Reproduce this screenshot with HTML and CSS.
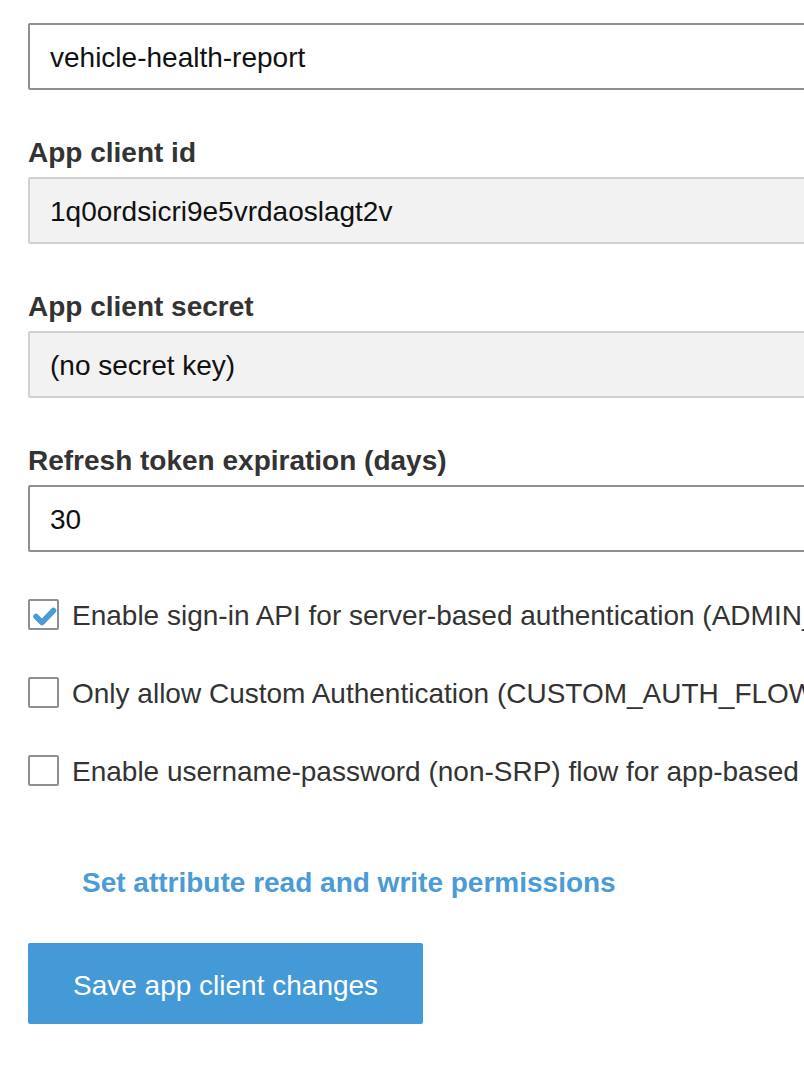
FILE: index.html
```html
<!DOCTYPE html>
<html>
<head>
<meta charset="utf-8">
<link rel="stylesheet" href="styles.css">
</head>
<body>
<main class="form">
  <input class="field" type="text" value="vehicle-health-report">

  <label class="label">App client id</label>
  <input class="field field-readonly" type="text" value="1q0ordsicri9e5vrdaoslagt2v" readonly>

  <label class="label">App client secret</label>
  <input class="field field-readonly" type="text" value="(no secret key)" readonly>

  <label class="label">Refresh token expiration (days)</label>
  <input class="field" type="text" value="30">

  <div class="checks">
    <div class="check-row">
      <span class="box">
        <svg viewBox="0 0 27 27" width="27" height="27"><path d="M6 15.5 L12 21.5 L23.5 9.5" fill="none" stroke="#4a9bd6" stroke-width="5.5" stroke-linecap="round" stroke-linejoin="round"/></svg>
      </span>
      <span class="check-text">Enable sign-in API for server-based authentication (ADMIN_NO_SRP_AUTH)</span>
    </div>
    <div class="check-row">
      <span class="box"></span>
      <span class="check-text">Only allow Custom Authentication (CUSTOM_AUTH_FLOW_ONLY)</span>
    </div>
    <div class="check-row">
      <span class="box"></span>
      <span class="check-text">Enable username-password (non-SRP) flow for app-based authentication (USER_PASSWORD_AUTH)</span>
    </div>
  </div>

  <a class="link" href="#">Set attribute read and write permissions</a>

  <button class="btn" type="button">Save app client changes</button>
</main>
</body>
</html>
```

FILE: styles.css
```css
html, body {
  margin: 0;
  padding: 0;
  overflow: hidden;
  background: #ffffff;
}

body {
  font-family: "Liberation Sans", Arial, Helvetica, sans-serif;
  font-size: 28px;
  color: #333333;
}

.form {
  display: flex;
  flex-direction: column;
  align-items: flex-start;
  padding: 23px 0 0 28px;
  width: 1100px;
}

.field {
  box-sizing: border-box;
  width: 1000px;
  height: 67px;
  margin: 0;
  padding: 3px 20px 0;
  border: 2px solid #8b9095;
  border-radius: 2px;
  background: #ffffff;
  font-family: "Liberation Sans", Arial, Helvetica, sans-serif;
  font-size: 28px;
  color: #111111;
  outline: none;
}

.field-readonly {
  background: #f2f2f2;
  border-color: #d0d0d0;
}

.label {
  display: block;
  margin-top: 47px;
  margin-bottom: 8px;
  line-height: 32px;
  font-weight: bold;
  color: #333333;
}

.checks {
  display: flex;
  flex-direction: column;
  gap: 47px;
  margin-top: 47px;
}

.check-row {
  display: flex;
  align-items: center;
  gap: 13px;
  height: 31px;
  white-space: nowrap;
}

.box {
  box-sizing: border-box;
  width: 31px;
  height: 31px;
  flex: none;
  border: 2px solid #8b9095;
  border-radius: 2px;
  background: #ffffff;
  display: flex;
  align-items: center;
  justify-content: center;
}

.box svg {
  display: block;
}

.check-text {
  line-height: 32px;
  padding-top: 2px;
  color: #333333;
}

.link {
  margin-top: 81px;
  margin-left: 54px;
  line-height: 32px;
  font-weight: bold;
  color: #4a9bd6;
  text-decoration: none;
}

.btn {
  margin-top: 44px;
  height: 81px;
  padding: 4px 45px 0;
  border: none;
  border-radius: 2px;
  background: #449ad6;
  color: #ffffff;
  font-family: "Liberation Sans", Arial, Helvetica, sans-serif;
  font-size: 28px;
  cursor: pointer;
}
```
